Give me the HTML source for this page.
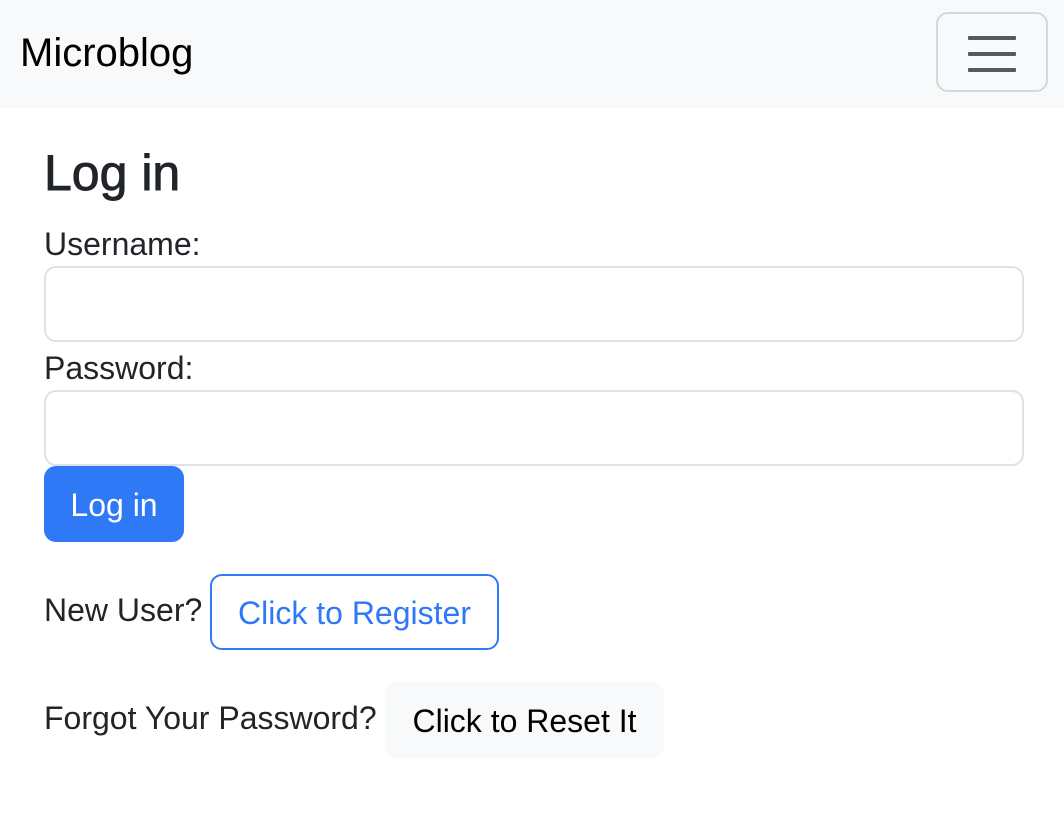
<!DOCTYPE html>
<html><head><meta charset="utf-8"><style>
*{box-sizing:border-box;margin:0;padding:0}
body{width:1064px;height:824px;background:#fff;font-family:"Liberation Sans",Helvetica,Arial,sans-serif;color:#212529;position:relative;overflow:hidden}
.nav{position:absolute;left:0;top:0;width:1064px;height:108px;background:#f8f9fa}
.brand{position:absolute;left:20px;top:30px;font-size:40px;color:#000;line-height:46px}
.tog{position:absolute;left:936px;top:12px;width:112px;height:80px;border:2px solid #d6d7d8;border-radius:12px}
.tog i{position:absolute;left:30px;width:48px;height:4px;background:#555a5e;border-radius:1px}
.a{position:absolute}
h1{position:absolute;left:44px;top:143px;font-size:50px;font-weight:normal;-webkit-text-stroke:0.9px #212529;line-height:60px}
.lbl{font-size:32px;line-height:36px}
.inp{position:absolute;left:44px;width:980px;height:76px;border:2px solid #dee2e6;border-radius:12px}
.btn{position:absolute;border-radius:12px;font-size:32px;display:flex;align-items:center;justify-content:center}
</style></head><body>
<div class="nav"><div class="brand">Microblog</div>
<div class="tog"><i style="top:22px"></i><i style="top:38px"></i><i style="top:54px"></i></div></div>
<h1>Log in</h1>
<div class="a lbl" style="left:44px;top:226px">Username:</div>
<div class="inp" style="top:266px"></div>
<div class="a lbl" style="left:44px;top:350px">Password:</div>
<div class="inp" style="top:390px"></div>
<div class="btn" style="left:44px;top:466px;width:140px;height:76px;background:#2f78f6;color:#fff;padding-top:2px">Log in</div>
<div class="a lbl" style="left:44px;top:592px">New User?</div>
<div class="btn" style="left:210px;top:574px;width:289px;height:76px;border:2px solid #2f78f6;color:#2f78f6;padding-top:2px">Click to Register</div>
<div class="a lbl" style="left:44px;top:700px">Forgot Your Password?</div>
<div class="btn" style="left:385px;top:682px;width:279px;height:76px;background:#f8f9fa;color:#000;padding-top:2px">Click to Reset It</div>
</body></html>
